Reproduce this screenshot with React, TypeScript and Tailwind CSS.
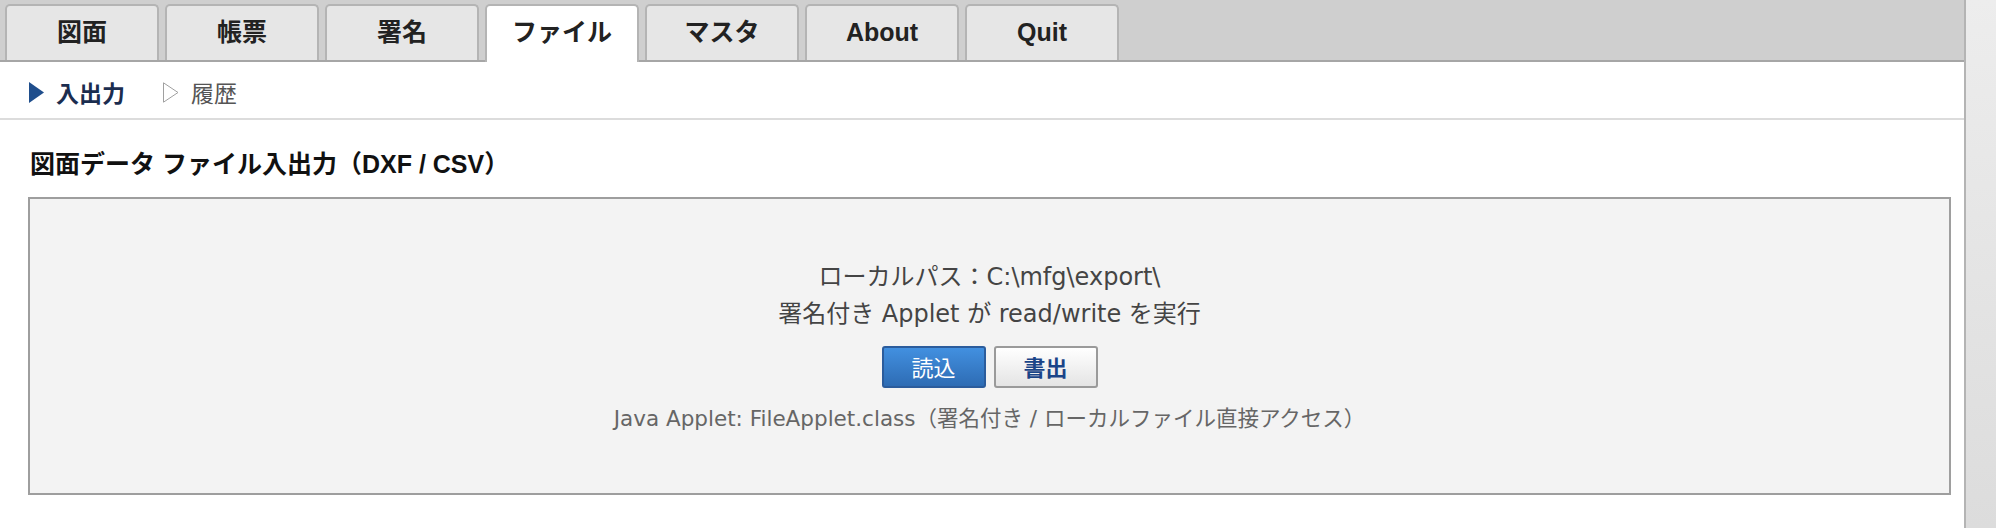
import React from "react";

const tabs = ["図面", "帳票", "署名", "ファイル", "マスタ", "About", "Quit"];

export default function App() {
  return (
    <div className="flex h-[528px] w-[1996px] overflow-hidden bg-white [text-spacing-trim:space-all]">
      <div className="flex min-w-0 flex-1 flex-col">
        {/* Tab bar */}
        <div className="flex h-[62px] items-end gap-[6px] border-b-2 border-[#a6a6a6] bg-[#cfcfcf] pl-[5px]">
          {tabs.map((t) => {
            const active = t === "ファイル";
            return (
              <div
                key={t}
                className={
                  active
                    ? "relative z-10 -mb-[2px] flex h-[58px] w-[154px] items-center justify-center rounded-t-[5px] border-2 border-b-0 border-[#b4b4b4] bg-white pb-[2px] text-[25px] font-bold text-[#222] [font-family:'Liberation_Sans','Noto_Sans_CJK_JP',sans-serif]"
                    : "flex h-[56px] w-[154px] items-center justify-center rounded-t-[5px] border-2 border-b-0 border-[#b4b4b4] bg-[#e6e6e6] text-[25px] font-bold text-[#222] [font-family:'Liberation_Sans','Noto_Sans_CJK_JP',sans-serif]"
                }
              >
                {t}
              </div>
            );
          })}
        </div>

        {/* Sub navigation */}
        <div className="flex h-[58px] items-center border-b-2 border-[#dcdcdc] pl-[29px] pt-[4px] text-[23px] [font-family:'Noto_Sans_CJK_JP',sans-serif]">
          <svg width="15" height="21" viewBox="0 0 15 21" className="shrink-0">
            <polygon points="0,0 15,10.5 0,21" fill="#1f4e8c" />
          </svg>
          <span className="ml-[12px] font-bold leading-none text-[#1b2d4f]">入出力</span>
          <svg width="16" height="21" viewBox="0 0 16 21" className="ml-[38px] shrink-0">
            <polygon points="0.5,0.8 15,10.5 0.5,20.2" fill="none" stroke="#a0a0a0" strokeWidth="1" />
          </svg>
          <span className="ml-[12px] leading-none text-[#555]">履歴</span>
        </div>

        {/* Heading */}
        <h2 className="mt-[28px] pl-[30px] text-[25px] font-bold leading-[32px] text-[#111] [font-family:'Liberation_Sans','Noto_Sans_CJK_JP',sans-serif]">
          図面データ ファイル入出力（DXF / CSV）
        </h2>

        {/* Content box */}
        <div className="ml-[28px] mr-[13px] mt-[17px] flex h-[298px] flex-col items-center justify-center border-2 border-[#9e9e9e] bg-[#f3f3f3] [font-family:'DejaVu_Sans','Noto_Sans_CJK_JP',sans-serif]">
          <div className="text-[24px] leading-[37px] text-[#444]">ローカルパス：C:\mfg\export\</div>
          <div className="text-[24px] leading-[37px] text-[#444]">署名付き Applet が read/write を実行</div>
          <div className="mt-[13px] flex gap-[8px]">
            <button className="flex h-[42px] w-[104px] items-center justify-center rounded-[3px] border-2 border-[#2b5c9c] bg-gradient-to-b from-[#4290e0] to-[#2e6cb4] text-[22px] text-white [font-family:'Noto_Sans_CJK_JP',sans-serif]">
              読込
            </button>
            <button className="flex h-[42px] w-[104px] items-center justify-center rounded-[3px] border-2 border-[#9a9a9a] bg-gradient-to-b from-[#ffffff] to-[#e4e4e4] text-[22px] font-bold text-[#1a4488] [font-family:'Noto_Sans_CJK_JP',sans-serif]">
              書出
            </button>
          </div>
          <div className="mt-[16px] text-[21.5px] leading-[30px] text-[#666]">
            Java Applet: FileApplet.class（署名付き / ローカルファイル直接アクセス）
          </div>
        </div>
      </div>

      {/* Scrollbar */}
      <div className="w-[32px] shrink-0 border-l-2 border-[#b4b4b4] bg-gradient-to-b from-[#ededed] to-[#dcdcdc]" />
    </div>
  );
}
